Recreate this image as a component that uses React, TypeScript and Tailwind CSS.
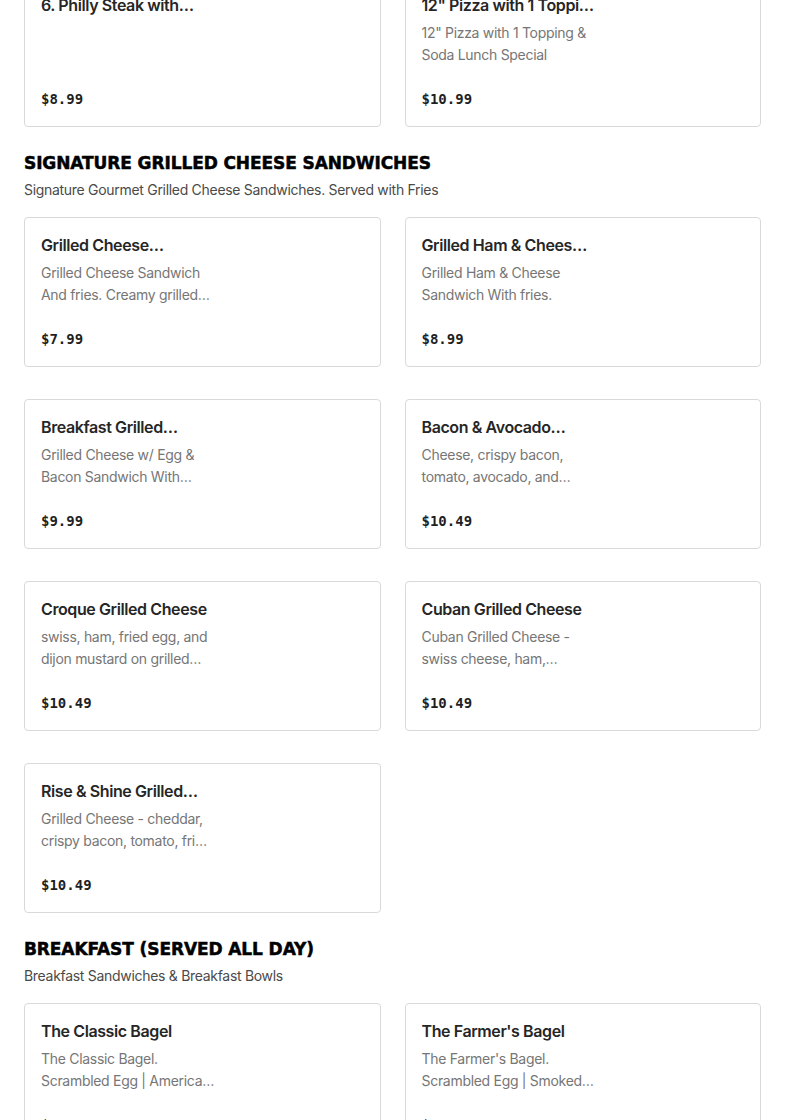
const SECTIONS = [
  {
    id: 'lunch',
    title: null,
    subtitle: null,
    items: [
      { name: '6. Philly Steak with…', desc: [], price: '$8.99' },
      { name: '12" Pizza with 1 Toppi…', desc: ['12" Pizza with 1 Topping &', 'Soda Lunch Special'], price: '$10.99' },
    ],
  },
  {
    id: 'grilled',
    title: 'SIGNATURE GRILLED CHEESE SANDWICHES',
    subtitle: 'Signature Gourmet Grilled Cheese Sandwiches. Served with Fries',
    items: [
      { name: 'Grilled Cheese…', desc: ['Grilled Cheese Sandwich', 'And fries. Creamy grilled…'], price: '$7.99' },
      { name: 'Grilled Ham & Chees…', desc: ['Grilled Ham & Cheese', 'Sandwich With fries.'], price: '$8.99' },
      { name: 'Breakfast Grilled…', desc: ['Grilled Cheese w/ Egg &', 'Bacon Sandwich With…'], price: '$9.99' },
      { name: 'Bacon & Avocado…', desc: ['Cheese, crispy bacon,', 'tomato, avocado, and…'], price: '$10.49' },
      { name: 'Croque Grilled Cheese', desc: ['swiss, ham, fried egg, and', 'dijon mustard on grilled…'], price: '$10.49' },
      { name: 'Cuban Grilled Cheese', desc: ['Cuban Grilled Cheese -', 'swiss cheese, ham,…'], price: '$10.49' },
      { name: 'Rise & Shine Grilled…', desc: ['Grilled Cheese - cheddar,', 'crispy bacon, tomato, fri…'], price: '$10.49' },
    ],
  },
  {
    id: 'breakfast',
    title: 'BREAKFAST (SERVED ALL DAY)',
    subtitle: 'Breakfast Sandwiches & Breakfast Bowls',
    items: [
      { name: 'The Classic Bagel', desc: ['The Classic Bagel.', 'Scrambled Egg | America…'], price: '$8.49' },
      { name: "The Farmer's Bagel", desc: ["The Farmer's Bagel.", 'Scrambled Egg | Smoked…'], price: '$9.49' },
    ],
  },
];

type Item = { name: string; desc: string[]; price: string };

function MenuCard({ item }: { item: Item }) {
  return (
    <div className="h-[150px] rounded-[4px] border border-[#d9d9d9] bg-white px-4 pt-[15px]">
      <p className="text-[16px] leading-6 font-semibold tracking-[-0.4px] text-[#262626] whitespace-nowrap">{item.name}</p>
      <div className="mt-[5px] h-[44px] text-[14px] leading-[22px] tracking-[-0.3px] text-[#767676]">
        {item.desc.map((line) => (
          <p key={line} className="whitespace-nowrap">{line}</p>
        ))}
      </div>
      <p className="mt-[23px] font-['DejaVu_Sans_Mono',monospace] text-[14px] leading-5 font-bold text-[#1f1f1f]">{item.price}</p>
    </div>
  );
}

export default function App() {
  return (
    <div className="min-h-screen overflow-hidden bg-white font-['Inter',sans-serif]">
      <div className="-mt-[23px] px-6">
        {SECTIONS.map((section) => (
          <section key={section.id} className={section.title ? 'pt-[24px]' : ''}>
            {section.title && (
              <>
                <h2 className="font-['DejaVu_Sans',sans-serif] text-[17px] leading-6 font-bold tracking-[-0.1px] text-black [-webkit-text-stroke:0.5px_black]">{section.title}</h2>
                <p className="mt-[5px] text-[14px] leading-5 tracking-[-0.3px] text-[#4a4a4a]">{section.subtitle}</p>
              </>
            )}
            <div className={`grid grid-cols-2 gap-x-6 gap-y-8 ${section.title ? 'mt-[17px]' : ''}`}>
              {section.items.map((item) => (
                <MenuCard key={item.name} item={item} />
              ))}
            </div>
          </section>
        ))}
      </div>
    </div>
  );
}
